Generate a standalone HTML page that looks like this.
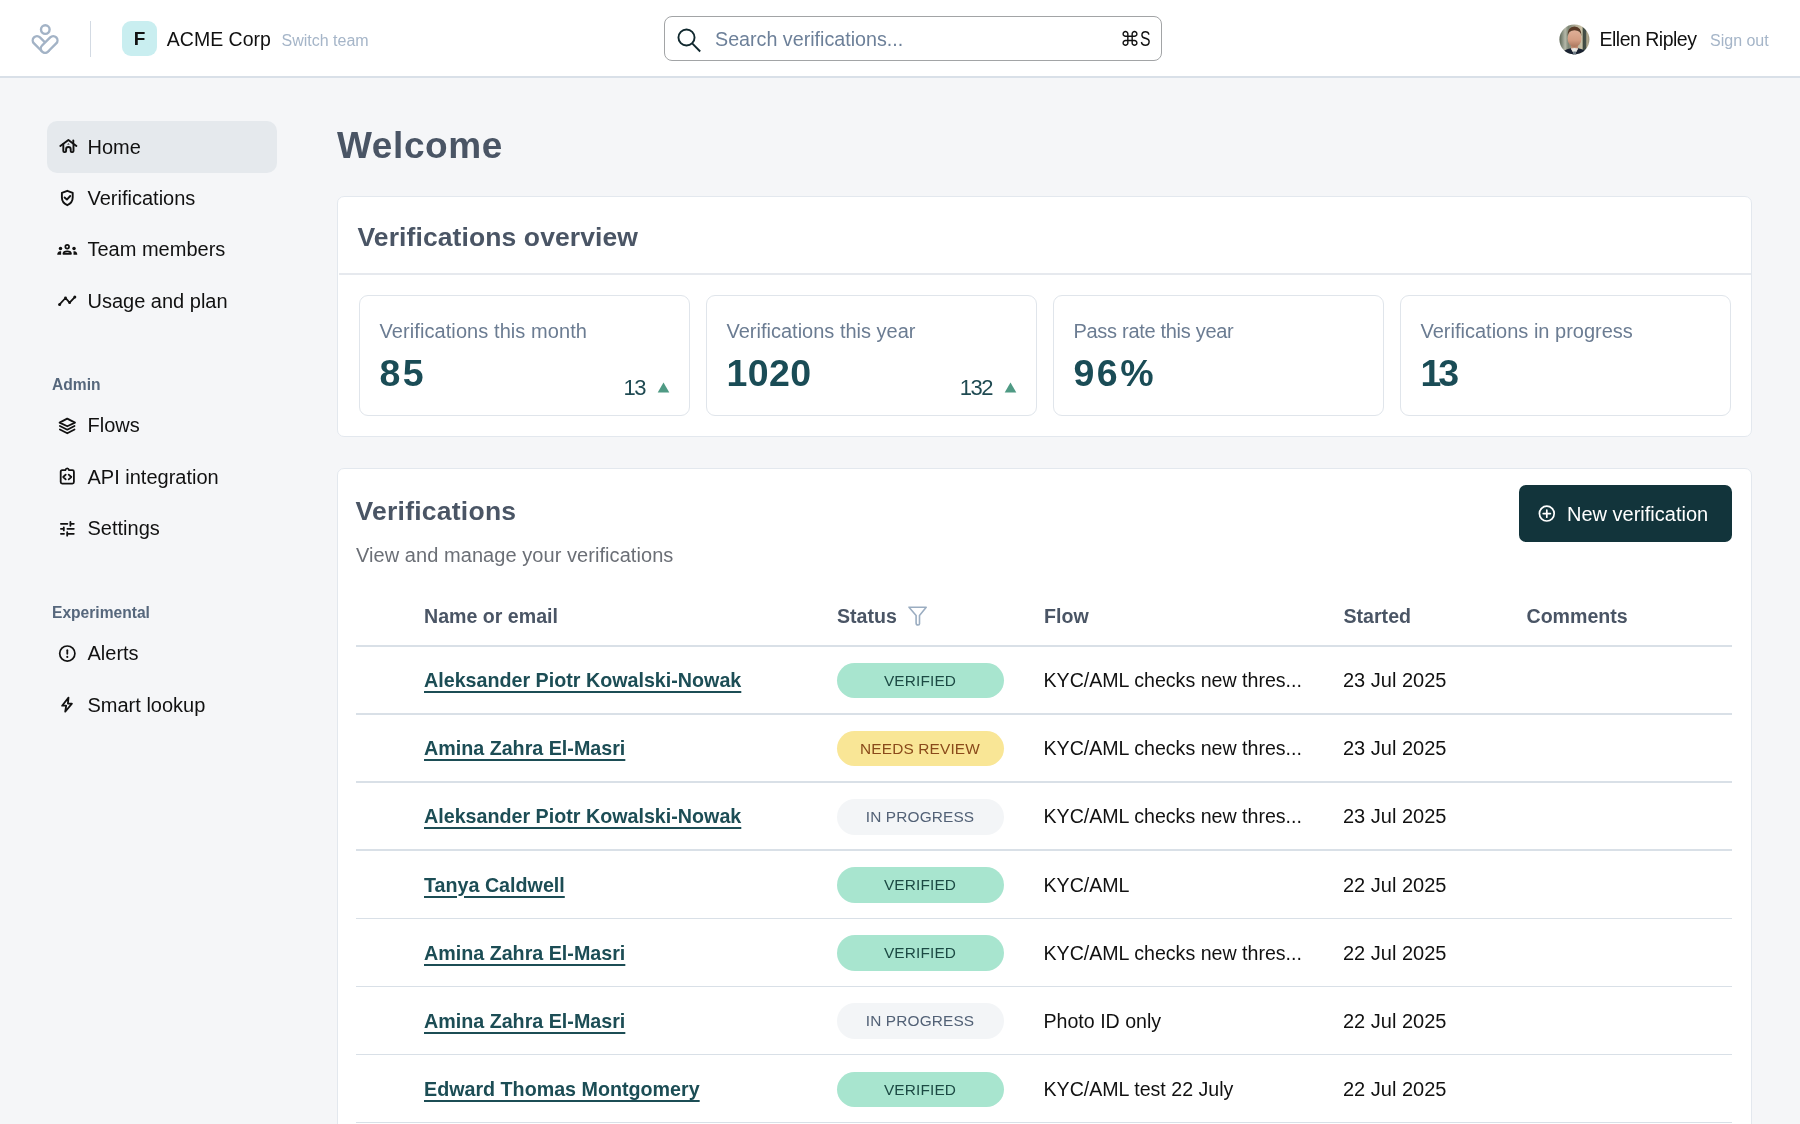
<!DOCTYPE html>
<html><head><meta charset="utf-8">
<style>
*{box-sizing:border-box;margin:0;padding:0}
html,body{width:1800px;height:1124px;overflow:hidden;background:#f5f6f8;font-family:"Liberation Sans",sans-serif;color:#111}
.a{position:absolute;white-space:nowrap;line-height:1}
#hdr{position:absolute;left:0;top:0;width:1800px;height:78px;background:#fff;border-bottom:2px solid #d9e0e8}
.card{background:#fff;border:1.5px solid #e3e8ee;border-radius:7px}
.stat{background:#fff;border:1.5px solid #e0e5eb;border-radius:9px}
.badge{width:167px;height:35.5px;border-radius:18px;font-size:15.4px;letter-spacing:0.15px;text-align:center;line-height:35.5px}
.b-ok{background:#a8e5cf;color:#1c4a44}
.b-rv{background:#f9e696;color:#8a4a1a}
.b-ip{background:#f3f5f7;color:#526176}
#root{position:absolute;left:0;top:0;width:1800px;height:1124px;overflow:hidden;will-change:transform}
</style></head><body><div id="root">
<div id="hdr"></div>
<svg class="a" style="left:28px;top:18px" width="34" height="40" viewBox="0 0 34 40"><g stroke="#a3b3c6" stroke-width="2.4"><circle cx="17.3" cy="11.6" r="4.3" fill="none"/><rect x="3.05" y="22.2" width="20" height="8.5" rx="4.25" fill="none" transform="rotate(45 13.05 26.45)"/><rect x="11.15" y="22.2" width="20" height="8.5" rx="4.25" fill="#fff" transform="rotate(-45 21.15 26.45)"/></g></svg>
<div class="a" style="left:89.5px;top:21px;width:1.6px;height:35.5px;background:#d3dae3"></div>
<div class="a" style="left:121.5px;top:21.2px;width:35px;height:35.2px;border-radius:9px;background:#c9eef0"></div>
<div class="a" style="left:133.8px;top:29.1px;font-size:19px;font-weight:700;color:#111;">F</div>
<div class="a" style="left:166.8px;top:29.9px;font-size:19.5px;font-weight:400;color:#111;">ACME Corp</div>
<div class="a" style="left:281.5px;top:32.8px;font-size:16px;font-weight:400;color:#a5b5c8;">Switch team</div>
<div class="a" style="left:664px;top:16.2px;width:498px;height:45px;border:1.6px solid #a2a4a6;border-radius:8px;background:#fff"></div>
<svg class="a" style="left:675px;top:27px" width="28" height="28" viewBox="0 0 28 28"><circle cx="11.5" cy="10.5" r="8.05" fill="none" stroke="#10282e" stroke-width="1.9"/><path d="M17.2 16.4 L25.2 24.5" stroke="#10282e" stroke-width="1.9" stroke-linecap="butt"/></svg>
<div class="a" style="left:715.0px;top:29.7px;font-size:19.7px;font-weight:400;color:#6d8099;">Search verifications...</div>
<div class="a" style="left:1120.0px;top:29.9px;font-size:19.5px;font-weight:400;color:#111;">&#8984;</div>
<div class="a" style="left:1139.8px;top:28.0px;font-size:22px;font-weight:400;color:#111;transform:scaleX(0.72);transform-origin:0 0">S</div>
<svg class="a" style="left:1558.5px;top:23.5px" width="31" height="31" viewBox="0 0 31 31"><defs><clipPath id="av"><circle cx="15.4" cy="15.5" r="15"/></clipPath><linearGradient id="bg" x1="0" x2="1" y1="0" y2="0"><stop offset="0" stop-color="#56604f"/><stop offset="0.12" stop-color="#8d9485"/><stop offset="0.2" stop-color="#b5b8a9"/><stop offset="0.3" stop-color="#7f8776"/><stop offset="0.55" stop-color="#b3ad97"/><stop offset="0.74" stop-color="#cbc3a7"/><stop offset="0.79" stop-color="#404b41"/><stop offset="0.86" stop-color="#46504a"/><stop offset="0.9" stop-color="#b8af92"/><stop offset="1" stop-color="#8a8772"/></linearGradient><linearGradient id="sk" x1="0" x2="0" y1="0" y2="1"><stop offset="0" stop-color="#e0b098"/><stop offset="0.6" stop-color="#d39d82"/><stop offset="1" stop-color="#a8755c"/></linearGradient></defs><g clip-path="url(#av)"><rect width="31" height="31" fill="url(#bg)"/><rect x="12" y="19" width="7" height="8" fill="#c28d73"/><ellipse cx="15.5" cy="14.4" rx="6.9" ry="8.7" fill="url(#sk)"/><path d="M8.5 12.5 Q8.3 2.6 15.5 2.5 Q22.7 2.6 22.5 12.5 Q21.8 6.2 15.5 6.2 Q9.2 6.2 8.5 12.5Z" fill="#5a3a27"/><path d="M1.5 31 Q3.5 26 11.8 24.2 L15.5 31 L19.2 24.2 Q27.5 26 29.5 31 Z" fill="#1a2332"/><path d="M11.8 24.6 L15.5 31 L19.2 24.6 Q15.5 23.2 11.8 24.6Z" fill="#e8e8e4"/><path d="M14.3 27.4 H16.8 L17.3 31 H13.8Z" fill="#6d7b86"/></g></svg>
<div class="a" style="left:1599.5px;top:29.9px;font-size:19.5px;font-weight:400;color:#111;letter-spacing:-0.5px">Ellen Ripley</div>
<div class="a" style="left:1710.0px;top:33.2px;font-size:16px;font-weight:400;color:#a5b5c8;">Sign out</div>
<div class="a" style="left:47px;top:121.0px;width:230px;height:52px;border-radius:10px;background:#e5e9ed"></div>
<svg class="a" style="left:56px;top:121.0px" width="24" height="52" viewBox="0 0 24 52"><g fill="none" stroke="#111" stroke-width="1.9" stroke-linejoin="round" stroke-linecap="round"><path d="M4.3 25 L12.4 18.9 L20.4 25"/><path d="M17.3 21.6 V19.4"/><path d="M7.3 23.2 V30 Q7.3 31.1 8.4 31.1 H9 Q10.1 31.1 10.1 30 V28.3 A2.3 2.3 0 0 1 14.7 28.3 V30 Q14.7 31.1 15.8 31.1 H16.4 Q17.5 31.1 17.5 30 V23.2"/></g><path d="M11.1 23.6 L12.4 22.2 L13.7 23.6 Z" fill="#111"/></svg>
<div class="a" style="left:87.5px;top:136.5px;font-size:20px;font-weight:400;color:#111;">Home</div>
<svg class="a" style="left:56px;top:172.2px" width="24" height="52" viewBox="0 0 24 52"><g fill="none" stroke="#111" stroke-width="1.9" stroke-linejoin="round" stroke-linecap="round"><path d="M11.3 18.8 L16.7 20.8 V25.6 C16.7 29.3 14.5 31.8 11.3 33.2 C8.1 31.8 5.9 29.3 5.9 25.6 V20.8 Z"/><path d="M8.6 25.5 L10.9 27.6 L14.2 24"/></g></svg>
<div class="a" style="left:87.5px;top:187.7px;font-size:20px;font-weight:400;color:#111;">Verifications</div>
<svg class="a" style="left:56px;top:223.9px" width="24" height="52" viewBox="0 0 24 52"><g fill="none" stroke="#111" stroke-width="1.7"><circle cx="11.2" cy="22.8" r="1.85"/><path d="M7.4 29.8 Q7.4 27.3 11.2 27.3 Q15 27.3 15 29.8 Z" stroke-linejoin="round"/></g><g fill="#111"><circle cx="4.5" cy="24.6" r="1.75"/><path d="M1.2 30.8 Q1.2 27.6 4.3 27.2 L5.1 27.2 L5.1 30.8 Z"/><circle cx="18" cy="24.6" r="1.75"/><path d="M21.3 30.8 Q21.3 27.6 18.3 27.2 L17.5 27.2 L17.5 30.8 Z"/></g></svg>
<div class="a" style="left:87.5px;top:239.4px;font-size:20px;font-weight:400;color:#111;">Team members</div>
<svg class="a" style="left:56px;top:275.2px" width="24" height="52" viewBox="0 0 24 52"><g fill="none" stroke="#111" stroke-width="1.8" stroke-linecap="round" stroke-linejoin="round"><path d="M3.6 29.4 L9.5 23.0 L13.6 27.7 L18.8 22.1"/></g><g fill="#111"><circle cx="3.6" cy="29.4" r="1.5"/><circle cx="9.5" cy="23" r="1.4"/><circle cx="13.6" cy="27.7" r="1.4"/><circle cx="18.8" cy="22.1" r="1.5"/></g></svg>
<div class="a" style="left:87.5px;top:290.7px;font-size:20px;font-weight:400;color:#111;">Usage and plan</div>
<svg class="a" style="left:56px;top:399.6px" width="24" height="52" viewBox="0 0 24 52"><g fill="none" stroke="#111" stroke-width="1.8" stroke-linejoin="round" stroke-linecap="round"><path d="M11.2 18.6 L19 22.6 L11.3 26.3 L3.6 22.6 Z"/><path d="M3.9 26 L11.3 29.7 L18.5 26"/><path d="M3.9 29.5 L11.3 33.3 L18.5 29.5"/></g></svg>
<div class="a" style="left:87.5px;top:415.1px;font-size:20px;font-weight:400;color:#111;">Flows</div>
<svg class="a" style="left:56px;top:451.3px" width="24" height="52" viewBox="0 0 24 52"><g fill="none" stroke="#111" stroke-width="1.8" stroke-linejoin="round" stroke-linecap="round"><path d="M9.3 19.2 H6.2 Q4.7 19.2 4.7 20.7 V31.1 Q4.7 32.6 6.2 32.6 H16.4 Q17.9 32.6 17.9 31.1 V20.7 Q17.9 19.2 16.4 19.2 H13.1 Q12.6 17.3 11.2 17.3 Q9.8 17.3 9.3 19.2 Z"/><path d="M9.7 23.6 L7.2 26 L9.7 28.3 M12.7 23.6 L15.3 26 L12.7 28.3"/></g></svg>
<div class="a" style="left:87.5px;top:466.8px;font-size:20px;font-weight:400;color:#111;">API integration</div>
<svg class="a" style="left:56px;top:502.9px" width="24" height="52" viewBox="0 0 24 52"><g fill="none" stroke="#111" stroke-width="1.8" stroke-linecap="round"><path d="M4.9 20.8 H11.4 M15.2 20.8 H17.8 M14.4 18.8 V22.8"/><path d="M4.9 25.8 H7.3 M11.4 25.8 H17.8 M7.8 24.3 V27.4"/><path d="M4.9 30.8 H8 M12 30.8 H17.8 M11.2 29.2 V32.7"/></g></svg>
<div class="a" style="left:87.5px;top:518.4px;font-size:20px;font-weight:400;color:#111;">Settings</div>
<svg class="a" style="left:56px;top:627.9px" width="24" height="52" viewBox="0 0 24 52"><circle cx="11.3" cy="25.6" r="7.6" fill="none" stroke="#111" stroke-width="1.7"/><path d="M11.3 22.2 V25.8" stroke="#111" stroke-width="1.8" stroke-linecap="round"/><circle cx="11.3" cy="28.9" r="1.05" fill="#111"/></svg>
<div class="a" style="left:87.5px;top:643.4px;font-size:20px;font-weight:400;color:#111;">Alerts</div>
<svg class="a" style="left:56px;top:679.3px" width="24" height="52" viewBox="0 0 24 52"><path d="M12.5 18.6 L6.1 26.7 H10.2 L9.2 32.7 L15.9 24.6 H11.9 Z" fill="none" stroke="#111" stroke-width="1.8" stroke-linejoin="round"/></svg>
<div class="a" style="left:87.5px;top:694.8px;font-size:20px;font-weight:400;color:#111;">Smart lookup</div>
<div class="a" style="left:52.0px;top:377.0px;font-size:15.6px;font-weight:700;color:#56677c;">Admin</div>
<div class="a" style="left:52.0px;top:605.0px;font-size:15.6px;font-weight:700;color:#56677c;">Experimental</div>
<div class="a" style="left:337.0px;top:127.1px;font-size:37px;font-weight:700;color:#4a5565;letter-spacing:0.6px">Welcome</div>
<div class="a card" style="left:336.7px;top:195.7px;width:1415.7px;height:241.8px"></div>
<div class="a" style="left:339px;top:273px;width:1411.5px;height:1.5px;background:#e6e9ee"></div>
<div class="a" style="left:357.5px;top:223.6px;font-size:26.5px;font-weight:700;color:#4a5565;letter-spacing:0.1px">Verifications overview</div>
<div class="a stat" style="left:359px;top:295.2px;width:331px;height:120.5px"></div>
<div class="a" style="left:379.5px;top:321.1px;font-size:20px;font-weight:400;color:#6b7c92;letter-spacing:0.08px">Verifications this month</div>
<div class="a" style="left:379.5px;top:354.9px;font-size:37.5px;font-weight:700;color:#1a4c56;letter-spacing:2.5px">85</div>
<div class="a" style="left:624px;top:370px;width:60px;height:30px"><span class="a" style="right:39px;top:7.1px;font-size:22px;color:#1f4a52;letter-spacing:-1.5px">13</span><svg class="a" style="left:32.5px;top:12px" width="13" height="11" viewBox="0 0 13 11"><path d="M6.5 0.5 L12.3 10.5 L0.7 10.5 Z" fill="#4f9a84"/></svg></div>
<div class="a stat" style="left:706px;top:295.2px;width:331px;height:120.5px"></div>
<div class="a" style="left:726.5px;top:321.1px;font-size:20px;font-weight:400;color:#6b7c92;">Verifications this year</div>
<div class="a" style="left:726.5px;top:354.9px;font-size:37.5px;font-weight:700;color:#1a4c56;letter-spacing:0.4px">1020</div>
<div class="a" style="left:971px;top:370px;width:60px;height:30px"><span class="a" style="right:39px;top:7.1px;font-size:22px;color:#1f4a52;letter-spacing:-1.5px">132</span><svg class="a" style="left:32.5px;top:12px" width="13" height="11" viewBox="0 0 13 11"><path d="M6.5 0.5 L12.3 10.5 L0.7 10.5 Z" fill="#4f9a84"/></svg></div>
<div class="a stat" style="left:1053px;top:295.2px;width:331px;height:120.5px"></div>
<div class="a" style="left:1073.5px;top:321.1px;font-size:20px;font-weight:400;color:#6b7c92;letter-spacing:-0.3px">Pass rate this year</div>
<div class="a" style="left:1073.5px;top:354.9px;font-size:37.5px;font-weight:700;color:#1a4c56;letter-spacing:2.5px">96%</div>
<div class="a stat" style="left:1400px;top:295.2px;width:331px;height:120.5px"></div>
<div class="a" style="left:1420.5px;top:321.1px;font-size:20px;font-weight:400;color:#6b7c92;">Verifications in progress</div>
<div class="a" style="left:1420.5px;top:354.9px;font-size:37.5px;font-weight:700;color:#1a4c56;letter-spacing:-3px">13</div>
<div class="a card" style="left:336.7px;top:467.7px;width:1415.7px;height:700px"></div>
<div class="a" style="left:355.5px;top:498.4px;font-size:26.5px;font-weight:700;color:#4a5565;letter-spacing:0.25px">Verifications</div>
<div class="a" style="left:356.0px;top:544.7px;font-size:20px;font-weight:400;color:#6b6f76;letter-spacing:0.06px">View and manage your verifications</div>
<div class="a" style="left:1519px;top:485.3px;width:212.5px;height:56.7px;border-radius:7px;background:#12343b"></div>
<svg class="a" style="left:1536px;top:503.4px" width="22" height="22" viewBox="0 0 22 22"><circle cx="10.8" cy="10.6" r="7.4" fill="none" stroke="#fff" stroke-width="1.7"/><path d="M10.8 7v7.2M7.2 10.6h7.2" stroke="#fff" stroke-width="1.7" stroke-linecap="round"/></svg>
<div class="a" style="left:1567.0px;top:503.9px;font-size:20px;font-weight:400;color:#fff;">New verification</div>
<div class="a" style="left:424.0px;top:607.2px;font-size:19.6px;font-weight:700;color:#4a5565;">Name or email</div>
<div class="a" style="left:837.0px;top:607.2px;font-size:19.6px;font-weight:700;color:#4a5565;">Status</div>
<svg class="a" style="left:906px;top:604px" width="24" height="24" viewBox="0 0 24 24"><path d="M3 3.2 H20.2 L13.5 11.4 V19.8 Q13.5 21 12.2 21 Q10.1 21 10.1 18.9 V11.4 Z" fill="none" stroke="#9badc1" stroke-width="1.6" stroke-linejoin="round"/></svg>
<div class="a" style="left:1044.0px;top:607.2px;font-size:19.6px;font-weight:700;color:#4a5565;">Flow</div>
<div class="a" style="left:1343.5px;top:607.2px;font-size:19.6px;font-weight:700;color:#4a5565;">Started</div>
<div class="a" style="left:1526.5px;top:607.2px;font-size:19.6px;font-weight:700;color:#4a5565;">Comments</div>
<div class="a" style="left:356px;top:645px;width:1376px;height:1.5px;background:#d9e0e7"></div>
<div class="a" style="left:424.0px;top:671.0px;font-size:19.7px;font-weight:700;color:#1c4d55;text-decoration:underline;text-decoration-thickness:1.5px;text-underline-offset:3.5px">Aleksander Piotr Kowalski-Nowak</div>
<div class="a badge b-ok" style="left:836.5px;top:662.7px">VERIFIED</div>
<div class="a" style="left:1043.5px;top:671.1px;font-size:19.6px;font-weight:400;color:#111;">KYC/AML checks new thres...</div>
<div class="a" style="left:1343.0px;top:670.1px;font-size:20px;font-weight:400;color:#111;">23 Jul 2025</div>
<div class="a" style="left:356px;top:713.1px;width:1376px;height:1.5px;background:#d9e0e7"></div>
<div class="a" style="left:424.0px;top:739.2px;font-size:19.7px;font-weight:700;color:#1c4d55;text-decoration:underline;text-decoration-thickness:1.5px;text-underline-offset:3.5px">Amina Zahra El-Masri</div>
<div class="a badge b-rv" style="left:836.5px;top:730.8px">NEEDS REVIEW</div>
<div class="a" style="left:1043.5px;top:739.3px;font-size:19.6px;font-weight:400;color:#111;">KYC/AML checks new thres...</div>
<div class="a" style="left:1343.0px;top:738.2px;font-size:20px;font-weight:400;color:#111;">23 Jul 2025</div>
<div class="a" style="left:356px;top:781.2px;width:1376px;height:1.5px;background:#d9e0e7"></div>
<div class="a" style="left:424.0px;top:807.3px;font-size:19.7px;font-weight:700;color:#1c4d55;text-decoration:underline;text-decoration-thickness:1.5px;text-underline-offset:3.5px">Aleksander Piotr Kowalski-Nowak</div>
<div class="a badge b-ip" style="left:836.5px;top:799.0px">IN PROGRESS</div>
<div class="a" style="left:1043.5px;top:807.4px;font-size:19.6px;font-weight:400;color:#111;">KYC/AML checks new thres...</div>
<div class="a" style="left:1343.0px;top:806.4px;font-size:20px;font-weight:400;color:#111;">23 Jul 2025</div>
<div class="a" style="left:356px;top:849.4px;width:1376px;height:1.5px;background:#d9e0e7"></div>
<div class="a" style="left:424.0px;top:875.5px;font-size:19.7px;font-weight:700;color:#1c4d55;text-decoration:underline;text-decoration-thickness:1.5px;text-underline-offset:3.5px">Tanya Caldwell</div>
<div class="a badge b-ok" style="left:836.5px;top:867.1px">VERIFIED</div>
<div class="a" style="left:1043.5px;top:875.5px;font-size:19.6px;font-weight:400;color:#111;">KYC/AML</div>
<div class="a" style="left:1343.0px;top:874.5px;font-size:20px;font-weight:400;color:#111;">22 Jul 2025</div>
<div class="a" style="left:356px;top:917.5px;width:1376px;height:1.5px;background:#d9e0e7"></div>
<div class="a" style="left:424.0px;top:943.6px;font-size:19.7px;font-weight:700;color:#1c4d55;text-decoration:underline;text-decoration-thickness:1.5px;text-underline-offset:3.5px">Amina Zahra El-Masri</div>
<div class="a badge b-ok" style="left:836.5px;top:935.3px">VERIFIED</div>
<div class="a" style="left:1043.5px;top:943.7px;font-size:19.6px;font-weight:400;color:#111;">KYC/AML checks new thres...</div>
<div class="a" style="left:1343.0px;top:942.6px;font-size:20px;font-weight:400;color:#111;">22 Jul 2025</div>
<div class="a" style="left:356px;top:985.6px;width:1376px;height:1.5px;background:#d9e0e7"></div>
<div class="a" style="left:424.0px;top:1011.7px;font-size:19.7px;font-weight:700;color:#1c4d55;text-decoration:underline;text-decoration-thickness:1.5px;text-underline-offset:3.5px">Amina Zahra El-Masri</div>
<div class="a badge b-ip" style="left:836.5px;top:1003.4px">IN PROGRESS</div>
<div class="a" style="left:1043.5px;top:1011.8px;font-size:19.6px;font-weight:400;color:#111;">Photo ID only</div>
<div class="a" style="left:1343.0px;top:1010.8px;font-size:20px;font-weight:400;color:#111;">22 Jul 2025</div>
<div class="a" style="left:356px;top:1053.8px;width:1376px;height:1.5px;background:#d9e0e7"></div>
<div class="a" style="left:424.0px;top:1079.9px;font-size:19.7px;font-weight:700;color:#1c4d55;text-decoration:underline;text-decoration-thickness:1.5px;text-underline-offset:3.5px">Edward Thomas Montgomery</div>
<div class="a badge b-ok" style="left:836.5px;top:1071.5px">VERIFIED</div>
<div class="a" style="left:1043.5px;top:1080.0px;font-size:19.6px;font-weight:400;color:#111;">KYC/AML test 22 July</div>
<div class="a" style="left:1343.0px;top:1078.9px;font-size:20px;font-weight:400;color:#111;">22 Jul 2025</div>
<div class="a" style="left:356px;top:1121.9px;width:1376px;height:1.5px;background:#d9e0e7"></div>
</div></body></html>
